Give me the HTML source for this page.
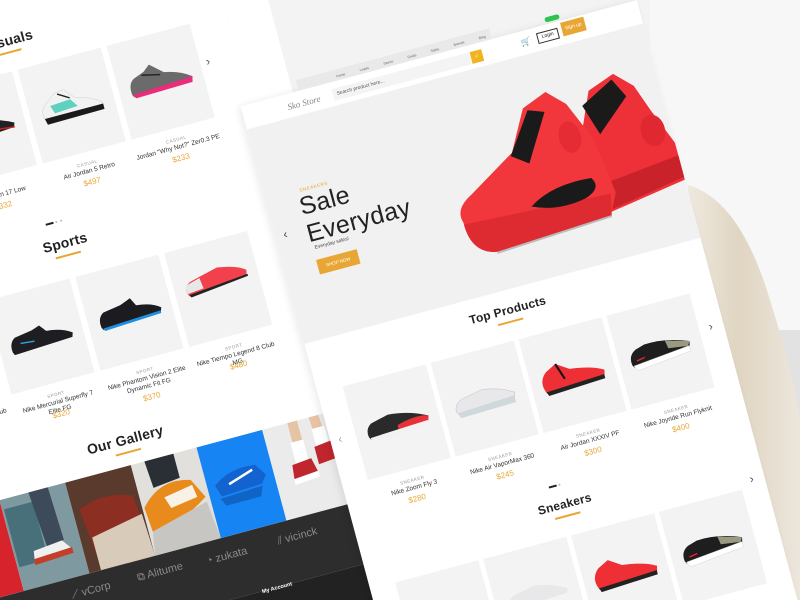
<!DOCTYPE html>
<html><head><meta charset="utf-8">
<style>
*{margin:0;padding:0;box-sizing:border-box}
html,body{width:800px;height:600px;overflow:hidden;background:#f3f3f3;font-family:"Liberation Sans",sans-serif}
#clip{position:relative;width:800px;height:600px;overflow:hidden}
#w{position:absolute;left:0;top:0;width:1px;height:1px;transform:rotate(-15deg);transform-origin:0 0}
.a{position:absolute;white-space:nowrap}
.card{position:absolute;width:86px;height:97px;background:#f3f3f3;overflow:hidden}
.card svg{position:absolute;left:8px;top:28px;width:70px;height:40px}
.cat{position:absolute;font-size:4.5px;color:#999;letter-spacing:.5px;text-align:center;width:86px}
.nm{position:absolute;font-size:6.5px;color:#333;text-align:center;width:86px;line-height:8px}
.pr{position:absolute;font-size:8px;color:#e8a735;text-align:center;width:86px}
.ttl{position:absolute;font-size:14px;color:#222;font-weight:bold;text-align:center;width:120px;letter-spacing:.2px;white-space:nowrap}
.ul{position:absolute;height:1.5px;width:26px;background:#e8a735}
.arr{position:absolute;font-size:12px;color:#555}
.logo{position:absolute;color:#8a8a8a;font-size:11px;white-space:nowrap}
</style></head><body><div id="clip">
<svg class="a" style="left:0;top:0" width="800" height="600">
<defs><linearGradient id="hg" x1="0" y1="0" x2="1" y2="0"><stop offset="0" stop-color="#efe9df"/><stop offset=".45" stop-color="#e0d5c2"/><stop offset="1" stop-color="#ece6dc"/></linearGradient></defs>
<rect x="650" y="0" width="150" height="600" fill="#f7f7f7"/>
<rect x="775" y="330" width="25" height="270" fill="#e2e2e2"/>
<path d="M688 185 Q740 200 770 300 Q795 380 800 420 L800 600 L730 600 Q715 450 700 330 Z" fill="url(#hg)"/>
</svg>

<div id="w">
<!-- LEFT PAGE -->
<div class="a" style="left:-300px;top:-300px;width:515px;height:1300px;background:#fff;box-shadow:2px 0 6px rgba(0,0,0,.06)"></div>
<div class="a" style="left:215px;top:-300px;width:44px;height:465px;background:#fff"></div>
<div class="ttl" style="left:-65px;top:33px">Casuals</div>
<div class="ul" style="left:-18px;top:52px"></div>
<div class="card" style="left:-93px;top:72px"><svg viewBox="0 0 100 50"><path d="M6 36 Q4 24 14 18 L40 12 Q70 14 96 28 L94 34 L8 40Z" fill="#222"/><path d="M60 30 L95 34" stroke="#c22" stroke-width="2"/></svg></div>
<div class="card" style="left:-1px;top:72px"><svg viewBox="0 0 100 50" style="top:18px;height:55px"><path d="M8 40 Q4 26 14 18 L30 6 L44 4 L58 20 Q80 24 94 36 L94 42 L10 44 Z" fill="#f2f2f2" stroke="#ccc" stroke-width=".6"/><path d="M20 22 L50 20 L58 32 L24 34Z" fill="#5fd1c0"/><path d="M8 38 L94 38 L94 46 L10 47Z" fill="#1a1a1a"/><path d="M34 8 L50 18" stroke="#222" stroke-width="2"/></svg></div>
<div class="card" style="left:91px;top:72px"><svg viewBox="0 0 100 50" style="top:20px;height:50px"><path d="M6 38 Q4 22 14 16 L30 10 L40 2 L58 18 Q80 22 96 34 L94 40 L8 42Z" fill="#6b6b6b"/><path d="M8 38 L96 34 L94 42 L10 44Z" fill="#ea2c7b"/><path d="M26 14 L52 20" stroke="#222" stroke-width="2"/></svg></div>
<div class="nm" style="left:-93px;top:185px">Air Jordan 17 Low</div><div class="pr" style="left:-93px;top:195px">$332</div>
<div class="cat" style="left:-1px;top:178px">CASUAL</div><div class="nm" style="left:-1px;top:185px">Air Jordan 5 Retro</div><div class="pr" style="left:-1px;top:195px">$497</div>
<div class="cat" style="left:91px;top:178px">CASUAL</div><div class="nm" style="left:91px;top:185px">Jordan "Why Not?" Zer0.3 PE</div><div class="pr" style="left:91px;top:195px">$233</div>
<div class="arr" style="left:183px;top:106px">›</div>
<div class="a" style="left:-14px;top:228px;width:8px;height:1.5px;background:#222"></div>
<div class="a" style="left:-4px;top:228px;width:2px;height:2px;border-radius:1px;background:#bbb"></div>
<div class="a" style="left:1px;top:228px;width:2px;height:2px;border-radius:1px;background:#bbb"></div>
<div class="ttl" style="left:-60px;top:243px">Sports</div>
<div class="ul" style="left:-13px;top:263px"></div>
<div class="card" style="left:-91px;top:287px"><svg viewBox="0 0 100 50"><path d="M6 38 Q4 24 14 18 L40 14 L52 10 L60 20 Q82 22 96 32 L94 38 L8 42Z" fill="#1e1e22"/><path d="M20 28 L40 30" stroke="#2aa6e0" stroke-width="2"/></svg></div>
<div class="card" style="left:1px;top:287px"><svg viewBox="0 0 100 50"><path d="M6 36 Q4 22 14 16 L40 12 L56 6 L62 18 Q84 20 96 30 L94 36 L8 40Z" fill="#1c1c20"/><path d="M8 38 L94 34 L94 38 L10 42Z" fill="#1e8ee0"/></svg></div>
<div class="card" style="left:93px;top:287px"><svg viewBox="0 0 100 50" style="top:18px"><path d="M6 36 Q4 24 14 20 L30 16 L56 10 Q84 14 96 24 L94 32 L8 40Z" fill="#f2404c"/><path d="M6 36 L6 24 L28 18 L30 34Z" fill="#e8e8e8"/><path d="M8 38 L96 30 L96 33 L10 42Z" fill="#222"/></svg></div>
<div class="nm" style="left:-183px;top:395px">Nike Tiempo Legend 8 Club TF</div>
<div class="cat" style="left:-91px;top:393px">SPORT</div><div class="nm" style="left:-91px;top:400px">Nike Mercurial Superfly 7 Elite FG</div><div class="pr" style="left:-91px;top:411px">$320</div>
<div class="cat" style="left:1px;top:393px">SPORT</div><div class="nm" style="left:1px;top:400px">Nike Phantom Vision 2 Elite<br>Dynamic Fit FG</div><div class="pr" style="left:1px;top:418px">$370</div>
<div class="cat" style="left:93px;top:393px">SPORT</div><div class="nm" style="left:93px;top:400px">Nike Tiempo Legend 8 Club MG</div><div class="pr" style="left:93px;top:410px">$480</div>
<div class="ttl" style="left:-53px;top:449px">Our Gallery</div>
<div class="ul" style="left:-6px;top:469px"></div>
<!-- gallery -->
<svg class="a" style="left:-260px;top:483px" width="475" height="94" viewBox="-260 0 475 94">
<rect x="-260" y="0" width="130" height="94" fill="#d6232c"/>
<rect x="-130" y="0" width="68" height="94" fill="#7e9aa0"/><rect x="-128" y="10" width="30" height="60" fill="#48707a"/><path d="M-100 0 L-80 0 L-78 55 L-96 58Z" fill="#3c4a5a"/><path d="M-110 58 L-80 55 L-72 66 L-112 70Z" fill="#f0f0f0"/><path d="M-112 66 L-72 64 L-72 70 L-112 72Z" fill="#c2402a"/>
<rect x="-62" y="0" width="68" height="94" fill="#5a3a2c"/><path d="M-55 30 Q-30 18 0 30 L4 70 L-50 80Z" fill="#8c2e22"/><path d="M-50 60 L4 50 L6 94 L-50 94Z" fill="#d8cbb9"/>
<rect x="6" y="0" width="68" height="94" fill="#e2e0dc"/><path d="M20 0 L50 0 L50 25 L22 28Z" fill="#2a2f36"/><path d="M8 45 Q30 20 60 30 L70 50 Q40 70 10 70Z" fill="#e88a1c"/><path d="M30 40 L60 35 L62 48 L34 52Z" fill="#f8f2e6"/><path d="M10 70 L70 55 L74 94 L6 94Z" fill="#c8c6c2"/>
<rect x="74" y="0" width="68" height="94" fill="#1684f2"/><path d="M82 42 Q100 28 126 32 L134 44 L128 52 L86 54Z" fill="#1262d0"/><path d="M96 44 L122 36" stroke="#fff" stroke-width="2.5"/><path d="M84 56 L128 54 L124 64 L88 64Z" fill="#0d4fa8" opacity=".6"/>
<rect x="142" y="0" width="73" height="94" fill="#ebebeb"/><path d="M168 0 L178 0 L178 40 L168 40Z" fill="#e6c3a5"/><path d="M190 0 L200 0 L202 30 L192 30Z" fill="#e6c3a5"/><rect x="166" y="20" width="13" height="22" fill="#fff"/><rect x="190" y="12" width="13" height="20" fill="#fff"/><path d="M162 42 L182 40 L186 58 L160 60Z" fill="#c0262e"/><path d="M188 30 L206 28 L210 46 L188 48Z" fill="#c0262e"/><path d="M160 56 L186 54 L186 60 L160 62Z" fill="#fff"/>
</svg>
<div class="a" style="left:-300px;top:577px;width:515px;height:62px;background:#2d2d2d"></div>
<div class="a" style="left:-300px;top:639px;width:515px;height:200px;background:#222"></div>
<div class="logo" style="left:-85px;top:588px">⟋ vCorp</div>
<div class="logo" style="left:-17px;top:588px">⧉ Alitume</div>
<div class="logo" style="left:54px;top:590px">◔ zukata</div>
<div class="logo" style="left:128px;top:589px">⫽ vicinck</div>
<div class="a" style="left:100px;top:637px;font-size:5.5px;color:#fff;font-weight:bold">My Account</div>

<!-- MIDDLE PAGE -->
<div class="a" style="left:205px;top:165px;width:410px;height:800px;background:#fff;overflow:hidden;box-shadow:-3px 0 8px rgba(0,0,0,.08)">
 <div class="a" style="left:0;top:24px;width:410px;height:222px;background:#f1f1f1"></div>
 <svg class="a" style="left:180px;top:60px" width="235" height="150" viewBox="0 0 235 150">
  <path d="M110 118 L140 60 L160 15 L188 5 L205 22 L215 50 L235 100 L235 125 L150 138Z" fill="#ee3038"/>
  <path d="M150 28 L185 10 L195 30 L160 60Z" fill="#1a1a1a"/>
  <path d="M140 110 L235 100 L235 122 L150 136Z" fill="#c9222a"/>
  <ellipse cx="212" cy="70" rx="12" ry="16" fill="#e02830"/>
  <path d="M5 110 Q0 95 20 85 L70 55 L92 15 L118 5 L135 22 L152 62 L160 120 L150 140 L30 146 Q5 140 5 110Z" fill="#f2373c"/>
  <path d="M68 58 L96 18 L112 24 L84 70Z" fill="#1a1a1a"/>
  <path d="M5 112 L155 120 L150 142 L30 147 Q5 142 5 112Z" fill="#de2b31"/>
  <path d="M75 112 Q100 96 140 100 Q148 112 130 118 Q100 124 75 112Z" fill="#1a1a1a"/>
  <ellipse cx="130" cy="55" rx="11" ry="16" fill="#e52c34"/>
  <path d="M30 148 L150 142" stroke="#bbb" stroke-width="2"/>
 </svg>
</div>
<!-- header -->
<div class="a" style="left:265px;top:154px;width:200px;height:11px;background:#e9e9e9;font-size:3.5px;color:#666;padding:5px 0 0 40px;word-spacing:14px">Home Leads Stores Deals Sales Brands Blog</div>
<div class="a" style="left:250px;top:173px;font-size:9px;color:#888;font-family:'Liberation Serif',serif;font-style:italic">Sko Store</div>
<div class="a" style="left:297px;top:172px;width:142px;height:12px;background:#f4f4f4;font-size:5px;color:#555;padding:3px 4px">Search product here...</div>
<div class="a" style="left:440px;top:172px;width:12px;height:12px;background:#f2b321;color:#fff;font-size:6px;text-align:center;line-height:12px">⌕</div>
<div class="a" style="left:492px;top:172px;font-size:8px;color:#333">🛒</div>
<div class="a" style="left:509px;top:171px;width:22px;height:11px;border:.8px solid #333;font-size:5px;text-align:center;line-height:9px;color:#222">Login</div>
<div class="a" style="left:535px;top:167px;width:24px;height:14px;background:#e8a735;font-size:5px;text-align:center;line-height:14px;color:#fff">Sign up</div>
<div class="a" style="left:521px;top:158px;width:15px;height:5px;background:#2ec24f;border-radius:3px"></div>
<!-- hero text -->
<div class="arr" style="left:213px;top:293px;color:#444">‹</div>
<div class="a" style="left:240px;top:259px;font-size:4.5px;color:#e8a735;letter-spacing:.6px">SNEAKERS</div>
<div class="a" style="left:236px;top:264px;font-size:25px;line-height:28px;color:#222;letter-spacing:.3px">Sale<br>Everyday</div>
<div class="a" style="left:240px;top:318px;font-size:5px;color:#444">Everyday sales!</div>
<div class="a" style="left:238px;top:333px;width:42px;height:15px;background:#e8a735;color:#fff;font-size:4.5px;text-align:center;line-height:15px">SHOP NOW</div>
<!-- top products -->
<div class="ttl" style="left:350px;top:424px;font-size:12px">Top Products</div>
<div class="ul" style="left:397px;top:442px"></div>
<div class="arr" style="left:213px;top:505px;color:#aaa">‹</div>
<div class="arr" style="left:600px;top:492px">›</div>
<div class="card" style="left:231px;top:462px"><svg viewBox="0 0 100 50"><path d="M6 36 Q4 24 14 18 L40 12 Q70 14 96 28 L94 34 L8 40Z" fill="#2a2a2a"/><path d="M50 30 Q80 22 96 28 L94 36 L50 38Z" fill="#e8323a"/><path d="M8 38 L94 34 L94 42 L10 44Z" fill="#f2f2f2"/></svg></div>
<div class="card" style="left:322px;top:462px"><svg viewBox="0 0 100 50"><path d="M6 34 Q6 22 18 18 L50 12 Q76 16 94 28 L92 34 L8 38Z" fill="#e8e8ea" stroke="#bbb" stroke-width=".6"/><path d="M8 36 L92 32 L92 42 L10 44Z" fill="#cfd8da"/></svg></div>
<div class="card" style="left:413px;top:462px"><svg viewBox="0 0 100 50"><path d="M6 36 Q2 22 14 12 L30 4 L48 16 Q80 20 96 30 L94 38 L8 42Z" fill="#ee2f36"/><path d="M8 40 L94 36 L94 42 L10 46Z" fill="#222"/><path d="M30 4 L38 28" stroke="#111" stroke-width="3"/></svg></div>
<div class="card" style="left:504px;top:462px"><svg viewBox="0 0 100 50"><path d="M6 34 Q4 20 16 14 L30 10 Q60 8 94 22 L92 30 L8 38Z" fill="#1e1e1e"/><path d="M60 12 L94 22 L90 28 L62 24Z" fill="#9a9a80"/><path d="M8 36 L92 28 L92 36 L12 44Z" fill="#fff" stroke="#ccc" stroke-width=".5"/><path d="M14 30 L26 28" stroke="#e23" stroke-width="2"/></svg></div>
<div class="cat" style="left:231px;top:568px">SNEAKER</div><div class="nm" style="left:231px;top:575px">Nike Zoom Fly 3</div><div class="pr" style="left:231px;top:585px">$280</div>
<div class="cat" style="left:322px;top:568px">SNEAKER</div><div class="nm" style="left:322px;top:575px">Nike Air VaporMax 360</div><div class="pr" style="left:322px;top:585px">$245</div>
<div class="cat" style="left:413px;top:568px">SNEAKER</div><div class="nm" style="left:413px;top:575px">Air Jordan XXXIV PF</div><div class="pr" style="left:413px;top:585px">$300</div>
<div class="cat" style="left:504px;top:568px">SNEAKER</div><div class="nm" style="left:504px;top:575px">Nike Joyride Run Flyknit</div><div class="pr" style="left:504px;top:585px">$400</div>
<div class="a" style="left:404px;top:612px;width:8px;height:1.5px;background:#222"></div>
<div class="a" style="left:414px;top:612px;width:2px;height:2px;background:#bbb;border-radius:1px"></div>
<div class="ttl" style="left:355px;top:626px;font-size:12px">Sneakers</div>
<div class="ul" style="left:402px;top:644px"></div>
<div class="arr" style="left:600px;top:650px">›</div>
<div class="card" style="left:231px;top:665px"></div>
<div class="card" style="left:322px;top:665px"><svg viewBox="0 0 100 50"><path d="M6 34 Q6 22 18 18 L50 12 Q76 16 94 28 L92 34 L8 38Z" fill="#e8e8ea"/></svg></div>
<div class="card" style="left:413px;top:665px"><svg viewBox="0 0 100 50"><path d="M6 36 Q2 22 14 12 L30 4 L48 16 Q80 20 96 30 L94 38 L8 42Z" fill="#ee2f36"/><path d="M8 40 L94 36 L94 42 L10 46Z" fill="#222"/></svg></div>
<div class="card" style="left:504px;top:665px"><svg viewBox="0 0 100 50"><path d="M6 34 Q4 20 16 14 L30 10 Q60 8 94 22 L92 30 L8 38Z" fill="#1e1e1e"/><path d="M60 12 L94 22 L90 28 L62 24Z" fill="#9a9a80"/><path d="M8 36 L92 28 L92 36 L12 44Z" fill="#fff" stroke="#ccc" stroke-width=".5"/><path d="M14 30 L26 28" stroke="#e23" stroke-width="2"/></svg></div>
</div>
</div></body></html>
